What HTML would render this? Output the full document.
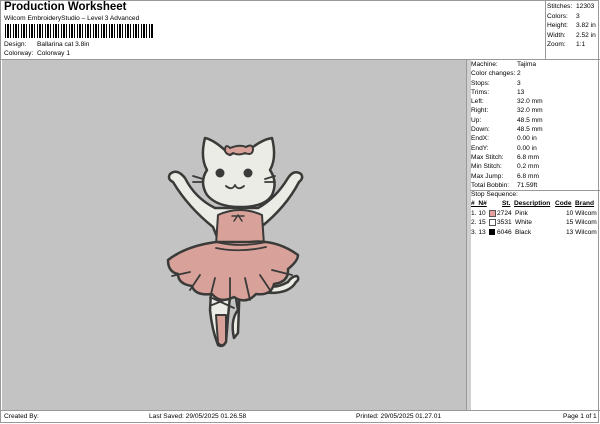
<!DOCTYPE html>
<html><head><style>
body{margin:0;width:600px;height:424px;background:#fff;font-family:"Liberation Sans",sans-serif;font-size:6.6px;color:#000;position:relative;overflow:hidden}
.a{position:absolute;white-space:nowrap}
</style></head><body>
<div class="a" style="left:4px;top:1px;font-size:11.5px;font-weight:bold">Production Worksheet</div>
<div class="a" style="left:4px;top:15px">Wilcom EmbroideryStudio – Level 3 Advanced</div>
<div class="a" style="left:5px;top:24px;width:148px;height:14px;background:repeating-linear-gradient(90deg,#000 0 1px,#fff 1px 2px,#000 2px 4px,#fff 4px 5px,#000 5px 6px,#fff 6px 8px)"></div>
<div class="a" style="left:4px;top:41px">Design:</div><div class="a" style="left:37px;top:41px">Ballarina cat 3.8in</div>
<div class="a" style="left:4px;top:50px">Colorway:</div><div class="a" style="left:37px;top:50px">Colorway 1</div>
<div class="a" style="left:0;top:0;width:599px;height:423px;border:1px solid #999;box-sizing:border-box"></div>
<div class="a" style="left:545px;top:0;width:1px;height:59px;background:#999"></div>
<div class="a" style="left:547px;top:2px;line-height:9.5px">Stitches:<br>Colors:<br>Height:<br>Width:<br>Zoom:</div>
<div class="a" style="left:576px;top:2px;line-height:9.5px">12303<br>3<br>3.82 in<br>2.52 in<br>1:1</div>
<div class="a" style="left:0;top:59px;width:600px;height:1px;background:#999"></div>
<div class="a" style="left:2px;top:60px;width:464px;height:350px;background:#c3c3c3"></div>
<div class="a" style="left:466px;top:60px;width:4px;height:350px;background:#d0d0d0;border-left:1px solid #999"></div>
<div class="a" style="left:471px;top:60px;line-height:9.3px">Machine:<br>Color changes:<br>Stops:<br>Trims:<br>Left:<br>Right:<br>Up:<br>Down:<br>EndX:<br>EndY:<br>Max Stitch:<br>Min Stitch:<br>Max Jump:<br>Total Bobbin:</div>
<div class="a" style="left:517px;top:60px;line-height:9.3px">Tajima<br>2<br>3<br>13<br>32.0 mm<br>32.0 mm<br>48.5 mm<br>48.5 mm<br>0.00 in<br>0.00 in<br>6.8 mm<br>0.2 mm<br>6.8 mm<br>71.59ft</div>
<div class="a" style="left:470px;top:190px;width:130px;height:1px;background:#999"></div>
<div class="a" style="left:471px;top:191px">Stop Sequence:</div>
<div class="a" style="left:471px;top:200px;font-weight:bold;text-decoration:underline">#&nbsp; N#</div>
<div class="a" style="left:502px;top:200px;font-weight:bold;text-decoration:underline">St.</div>
<div class="a" style="left:514px;top:200px;font-weight:bold;text-decoration:underline">Description</div>
<div class="a" style="left:555px;top:200px;font-weight:bold;text-decoration:underline">Code</div>
<div class="a" style="left:575px;top:200px;font-weight:bold;text-decoration:underline">Brand</div>
<div class="a" style="left:471px;top:209px;line-height:9.3px">1. 10<br>2. 15<br>3. 13</div>
<div class="a" style="left:489px;top:210px;width:5px;height:5px;background:#e8a0a0;border:1px solid #555"></div>
<div class="a" style="left:489px;top:219px;width:5px;height:5px;background:#fff;border:1px solid #555"></div>
<div class="a" style="left:489px;top:229px;width:6px;height:6px;background:#000"></div>
<div class="a" style="left:497px;top:209px;line-height:9.3px">2724<br>3531<br>6046</div>
<div class="a" style="left:515px;top:209px;line-height:9.3px">Pink<br>White<br>Black</div>
<div class="a" style="left:566px;top:209px;line-height:9.3px">10 Wilcom<br>15 Wilcom<br>13 Wilcom</div>
<div class="a" style="left:0;top:410px;width:600px;height:1px;background:#999"></div>
<div class="a" style="left:4px;top:413px">Created By:</div>
<div class="a" style="left:149px;top:413px">Last Saved: 29/05/2025 01.26.58</div>
<div class="a" style="left:356px;top:413px">Printed: 29/05/2025 01.27.01</div>
<div class="a" style="left:563px;top:413px">Page 1 of 1</div>
<svg class="a" style="left:160px;top:130px" width="160" height="230" viewBox="0 0 160 230">
<g stroke="#3a3a38" stroke-width="2.5" stroke-linejoin="round" stroke-linecap="round">
<path d="M100 150 q10 12 28 2 q4-6 9-6 q3 3-1 6 q-8 14-36 10z" fill="#ecece6"/>
<path d="M52 145 l-2 35 q2 20 8 35 q5 3 8-3 l2-25 l4-42z" fill="#ecece6"/>
<path d="M72 145 l6 35 q-8 10-4 28 l4-5 l2-55z" fill="#ecece6"/>
<path d="M56 185 l2 28 q5 5 8-2 l0-26z" fill="#d8a29b" stroke-width="2"/>
<path d="M52 168 l22 10 M52 175 l20-8" fill="none" stroke-width="1.8"/>
<path d="M70 25 q-15-15-25-17 q-5 20 2 32 q-8 12 0 25 q10 12 33 12 q25 0 32-12 q6-13-2-25 q7-12 2-32 q-12 2-25 14 q-8-3-17 3z" fill="#ecece6"/>
<path d="M55 78 q-20-10-30-30 q-8-10-15-4 q-3 5 3 8 q15 25 40 45 l4 10 h40 l4-10 q25-20 38-45 q5-4 2-8 q-7-5-13 4 q-12 20-30 30z" fill="#ecece6"/>
<path d="M58 85 q22 -10 44 0 l2 30 h-48z" fill="#d8a29b" stroke-width="2"/>
<path d="M78 85 l-4 6 M78 85 l4 6 M72 86 h12" fill="none" stroke-width="1.5"/>
<path d="M56 112 q-30 4-48 18 q0 12 10 14 q0 10 14 12 q3 10 20 8 q8 10 22 3 q12 8 22-3 q15 2 18-10 q15-2 14-15 q10-8 10-14 q-22-16-48-13z" fill="#d8a29b"/>
<path d="M56 112 q24 6 50 0 M56 118 q24 5 50-1 M30 142 l-18 4 M40 145 l-10 15 M55 148 l-5 20 M70 148 l0 22 M85 148 l5 22 M100 145 l12 18 M112 140 l20 5" fill="none" stroke-width="1.8"/>
<path d="M70 18 q-5-5-5 3 q3 6 8 2 q6 3 12 0 q7 3 8-3 q0-7-7-3 q-6-3-16 1z" fill="#d8a29b" stroke-width="2"/>
<circle cx="60" cy="43" r="4.5" fill="#3a3a38" stroke="none"/><circle cx="88" cy="43" r="4.5" fill="#3a3a38" stroke="none"/>
<path d="M66 56 q6 5 9-1 q3 6 9 1 M33 46 l10 3 M33 52 l10 0 M115 46 l-10 3 M115 52 l-10 0" fill="none" stroke-width="1.8"/>
</g></svg>
</body></html>
